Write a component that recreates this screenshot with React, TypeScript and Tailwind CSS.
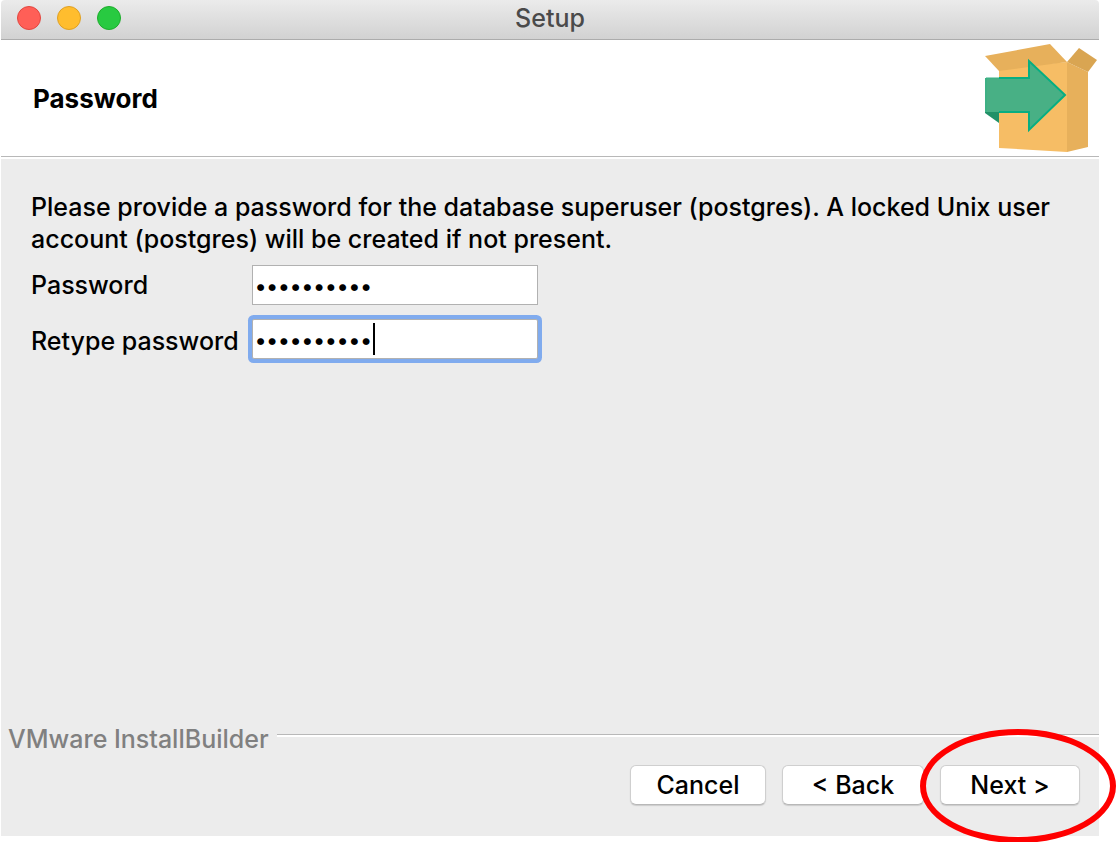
import React from 'react';

function TitleBar() {
  return (
    <header className="grid h-10 grid-cols-[1fr_auto_1fr] items-center rounded-t-sm border-b border-[#acacac] bg-linear-to-b from-[#ebebeb] to-[#d2d2d2] px-4 pb-1">
      <div className="flex gap-4">
        <button type="button" aria-label="Close" className="size-6 rounded-full border border-[#e2463f] bg-[#ff5f57]" />
        <button type="button" aria-label="Minimize" className="size-6 rounded-full border border-[#dfa023] bg-[#ffbd2e]" />
        <button type="button" aria-label="Zoom" className="size-6 rounded-full border border-[#1dad2b] bg-[#28ca41]" />
      </div>
      <h1 className="text-[25px] leading-8 text-[#4a4a4a]">Setup</h1>
    </header>
  );
}

function BoxIcon() {
  return (
    <svg viewBox="0 0 112 110" className="h-[110px] w-28 shrink-0" aria-hidden="true">
      <path d="M14 24 82 18V108L14 104Z" fill="#f6bd65" />
      <path d="M82 18 103 28V103L82 108Z" fill="#e7b05b" />
      <path d="M0 12 65 0 82 18 14 27Z" fill="#e7b05b" />
      <path d="M82 18 94 4 112 16 103 28Z" fill="#d9a552" />
      <path d="M0 67H14V79L0 69Z" fill="#229168" />
      <path d="M0 34H44V17L80 51 44 86V68H0Z" fill="#48b085" />
      <path d="M14 34H44V17L80 51 44 86V68H14" fill="none" stroke="#06ae82" strokeWidth="2" />
      <path d="M1 68V34H14" fill="none" stroke="#35b184" strokeWidth="1" />
    </svg>
  );
}

const input = 'h-10 w-full border border-[#b1b1b1] bg-white px-0.5 pt-0.5 text-[22px] text-black caret-transparent outline-none';

const button = 'h-10 rounded-md border border-[#cfcfcf] border-b-[#b8b8b8] bg-white text-[25px] leading-8 text-black shadow-[0_1px_1px_0_#cccccc]';

export default function App() {
  return (
    <div className="flex min-h-screen flex-col overflow-hidden bg-white pr-[17px] pb-1.5 pl-px font-['Inter',sans-serif] text-[25px] leading-8 font-medium text-black">
      <TitleBar />
      <section className="flex items-center justify-between border-b border-[#b8b8b8] bg-white pt-1 pr-0.5 pb-0.5 pl-8">
        <h2 className="text-[26px] font-bold">Password</h2>
        <BoxIcon />
      </section>
      <main className="flex grow flex-col border-t-2 border-white bg-[#ececec] px-[30px] pt-8">
        <p>
          Please provide a password for the database superuser (postgres). A locked Unix user account (postgres) will be
          created if not present.
        </p>
        <form className="mt-2.5 grid grid-cols-[auto_286px] justify-start gap-x-[13px] gap-y-3.5">
          <label htmlFor="password" className="pt-1">
            Password
          </label>
          <input id="password" type="password" defaultValue="postgres12" className={input} />
          <label htmlFor="retype" className="pt-1.5">
            Retype password
          </label>
          <div className="relative">
            <input
              id="retype"
              type="password"
              defaultValue="postgres12"
              className={`${input} rounded-xs shadow-[0_0_0_4px_#80abee]`}
            />
            <span className="absolute top-1 left-[121px] h-8 w-0.5 bg-black" />
          </div>
        </form>
      </main>
      <footer className="bg-[#ececec] pb-[31px]">
        <div className="flex items-center gap-2 pl-[7px]">
          <span className="text-[#808080]">VMware InstallBuilder</span>
          <div className="mb-2 h-[3px] grow border-t border-[#b8b8b8] bg-white" />
        </div>
        <div className="mt-2.5 flex justify-end gap-4 pr-[19px]">
          <button type="button" className={`${button} w-[136px]`}>Cancel</button>
          <button type="button" className={`${button} w-[142px]`}>&lt; Back</button>
          <div className="relative">
            <button type="button" className={`${button} w-[140px]`}>Next &gt;</button>
            <div className="pointer-events-none absolute -top-9 -left-5 h-[114px] w-[196px] rounded-[50%] border-6 border-[#ff0000]" />
          </div>
        </div>
      </footer>
    </div>
  );
}
